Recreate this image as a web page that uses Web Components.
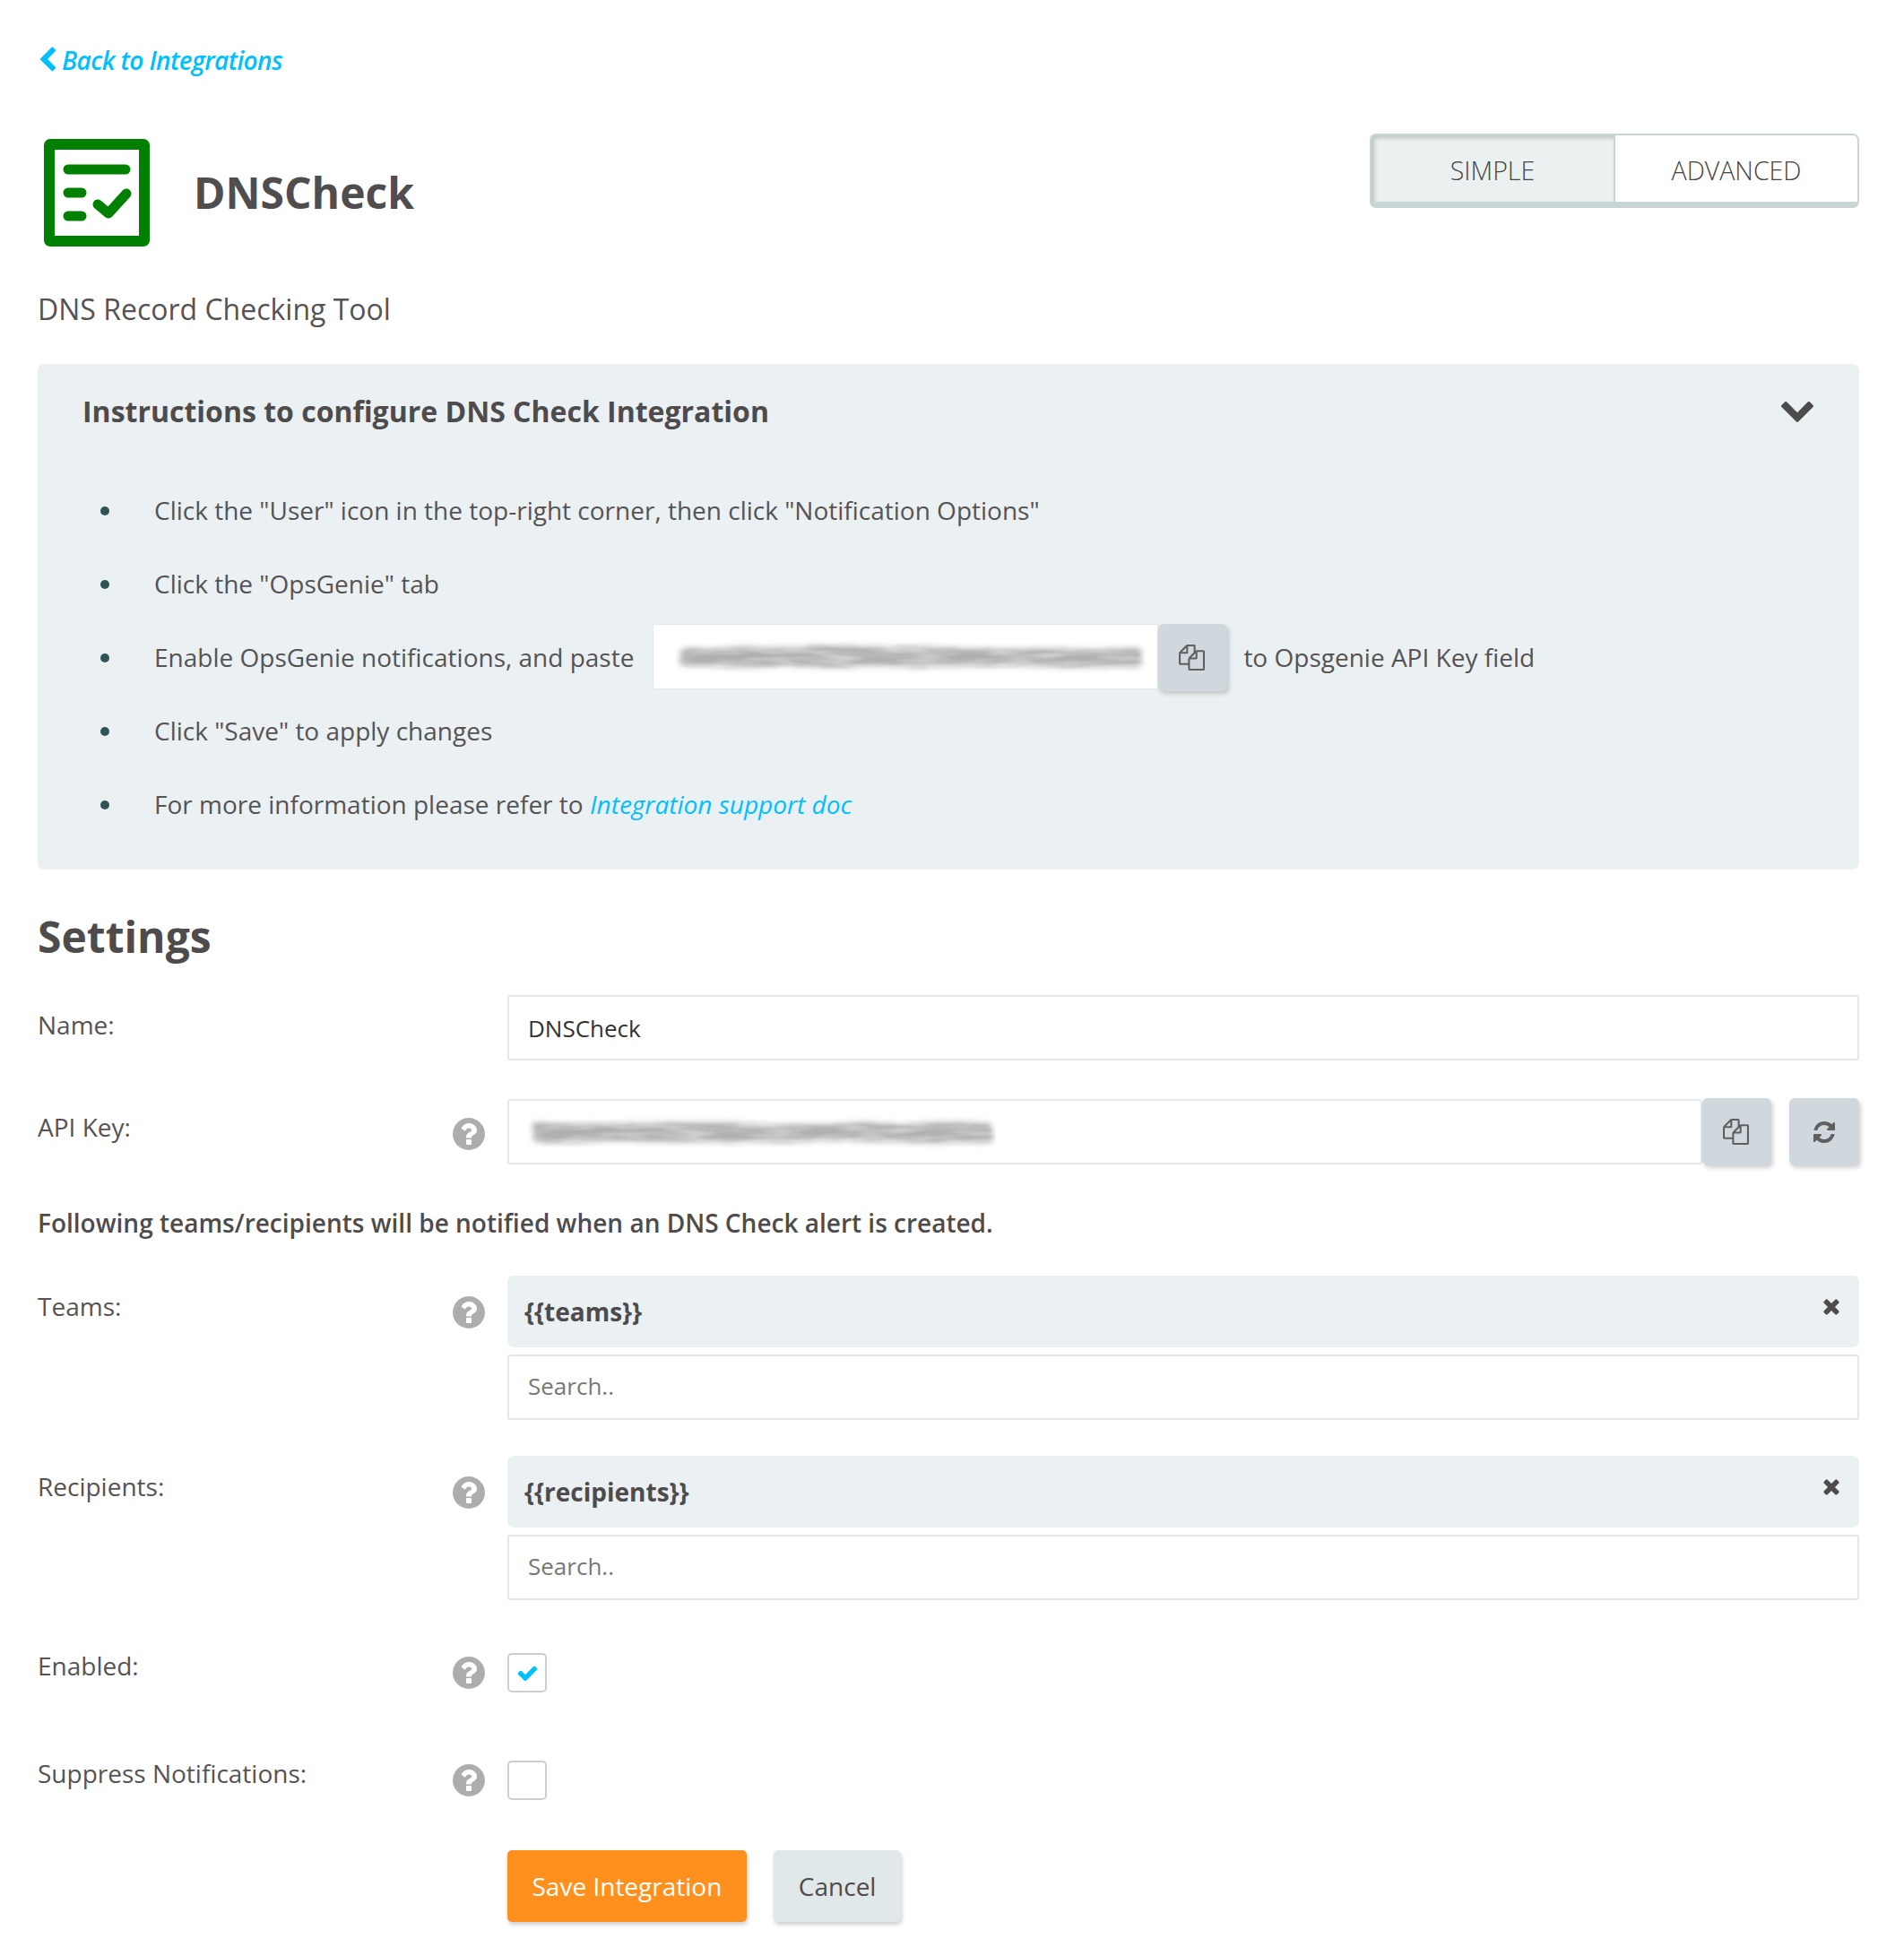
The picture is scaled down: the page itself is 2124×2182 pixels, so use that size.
<!DOCTYPE html>
<html lang="en"><head><meta charset="utf-8"><title>DNSCheck</title>
<style>
html,body{margin:0;background:#fff}
body{font-family:"Open Sans",sans-serif;color:#565354;font-size:28px}
</style></head><body>
<integration-page></integration-page>
<template id="t-page">
<style>
:host{display:block;padding:47px 50px 38px 42px;width:2032px}
.head{display:flex;align-items:flex-start;margin-top:64px;height:126px}
.logo{width:118px;height:120px;margin:4px 0 0 7px;flex:none}
h1{margin:0;font-size:48px;line-height:64px;font-weight:700;margin:32px 0 0 49px;flex:1;color:#504d4e}
.sub{margin:46px 0 0;font-size:32px;line-height:44px;font-weight:400}
h2{margin:43px 0 0;font-size:48px;line-height:64px;font-weight:700;color:#4e4b4c}
.note{margin:44px 0 0;font-size:28px;line-height:40px;font-weight:600;color:#4e4b4c}
.acts{display:flex;gap:30px;margin-left:524px;margin-top:56px}
.stack{display:flex;flex-direction:column;gap:8px}
.api{display:flex;gap:20px;align-items:flex-start}
.apif{flex:1;display:flex;align-items:flex-start;min-width:0}
form-row{margin-top:var(--mt)}
</style>
<back-link>Back to Integrations</back-link>
<div class="head">
<svg class="logo" viewBox="0 0 118 120" aria-hidden="true"><path fill="#008000" fill-rule="evenodd" d="M7 0H111a7 7 0 0 1 7 7V113a7 7 0 0 1-7 7H7a7 7 0 0 1-7-7V7a7 7 0 0 1 7-7ZM12 12V108H106V12Z"/><g fill="none" stroke="#008000" stroke-width="11" stroke-linecap="round" stroke-linejoin="round"><path d="M27 34H91"/><path d="M27 60H42"/><path d="M27 86H42"/><path d="M60 73L72 83L92 61"/></g></svg>
<h1>DNSCheck</h1>
<mode-toggle></mode-toggle>
</div>
<p class="sub">DNS Record Checking Tool</p>
<instructions-panel title-text="Instructions to configure DNS Check Integration"></instructions-panel>
<h2>Settings</h2>
<form-row label="Name:" style="--mt:33px;--lt:14px"><text-box value="DNSCheck"></text-box></form-row>
<form-row label="API Key:" help style="--mt:43px;--lt:12px;--ht:17px"><div class="api"><div class="apif"><text-box blurred style="flex:1"></text-box><icon-button icon="copy" style="margin-top:-1px;width:77px"></icon-button></div><icon-button icon="refresh" style="margin-top:-1px"></icon-button></div></form-row>
<p class="note">Following teams/recipients will be notified when an DNS Check alert is created.</p>
<form-row label="Teams:" help style="--mt:39px;--lt:15px;--ht:19px"><div class="stack"><tag-chip>{{teams}}</tag-chip><text-box placeholder="Search.."></text-box></div></form-row>
<form-row label="Recipients:" help style="--mt:40px;--lt:15px;--ht:19px"><div class="stack"><tag-chip>{{recipients}}</tag-chip><text-box placeholder="Search.."></text-box></div></form-row>
<form-row label="Enabled:" help style="--mt:59px;--lt:-5px;--ht:0px"><check-box checked></check-box></form-row>
<form-row label="Suppress Notifications:" help style="--mt:76px;--lt:-5px;--ht:0px"><check-box></check-box></form-row>
<div class="acts"><action-button primary>Save Integration</action-button><action-button>Cancel</action-button></div>
</template>
<script>
const P={
left:'M1427 301l-531 531 531 531q19 19 19 45t-19 45l-166 166q-19 19-45 19t-45-19l-742-742q-19-19-19-45t19-45l742-742q19-19 45-19t45 19l166 166q19 19 19 45t-19 45z',
down:'M1683 808l-742 741q-19 19-45 19t-45-19l-742-741q-19-19-19-45.5t19-45.5l166-165q19-19 45-19t45 19l531 531 531-531q19-19 45-19t45 19l166 165q19 19 19 45.5t-19 45.5z',
times:'M1490 1322q0 40-28 68l-136 136q-28 28-68 28t-68-28l-294-294-294 294q-28 28-68 28t-68-28l-136-136q-28-28-28-68t28-68l294-294-294-294q-28-28-28-68t28-68l136-136q28-28 68-28t68 28l294 294 294-294q28-28 68-28t68 28l136 136q28 28 28 68t-28 68l-294 294 294 294q28 28 28 68z',
refresh:'M1639 1056q0 5-1 7-64 268-268 434.5t-478 166.5q-146 0-282.5-55t-243.5-157l-129 129q-19 19-45 19t-45-19-19-45v-448q0-26 19-45t45-19h448q26 0 45 19t19 45-19 45l-137 137q71 66 161 102t187 36q134 0 250-65t186-179q11-17 53-117 8-23 30-23h192q13 0 22.5 9.5t9.5 22.5zm25-800v448q0 26-19 45t-45 19h-448q-26 0-45-19t-19-45 19-45l138-138q-148-137-349-137-134 0-250 65t-186 179q-11 17-53 117-8 23-30 23h-199q-13 0-22.5-9.5t-9.5-22.5v-7q65-268 270-434.5t480-166.5q146 0 284 55.5t245 156.5l130-129q19-19 45-19t45 19 19 45z',
help:'M1024 1376v-192q0-14-9-23t-23-9h-192q-14 0-23 9t-9 23v192q0 14 9 23t23 9h192q14 0 23-9t9-23q0-19 21.5-49.5t54.5-49.5q32-18 49-28.5t46-35 44.5-48 28-60.5 12.5-81zm384 192q0 209-103 385.5t-279.5 279.5-385.5 103-385.5-103-279.5-279.5-103-385.5 103-385.5 279.5-279.5 385.5-103 385.5 103 279.5 279.5 103 385.5z',
check:'M1671 566q0 40-28 68l-724 724-136 136q-28 28-68 28t-68-28l-136-136-362-362q-28-28-28-68t28-68l136-136q28-28 68-28t68 28l294 295 656-657q28-28 68-28t68 28l136 136q28 28 28 68z',
copy:'M1696 384q40 0 68 28t28 68v1216q0 40-28 68t-68 28h-960q-40 0-68-28t-28-68v-288h-544q-40 0-68-28t-28-68v-672q0-40 20-88t48-76l408-408q28-28 76-48t88-20h416q40 0 68 28t28 68v328q68-40 128-40h416zm-544 213l-299 299h299v-299zm-640-384l-299 299h299v-299zm196 647l316-316v-416h-384v416q0 40-28 68t-68 28h-416v640h512v-256q0-40 20-88t48-76zm956 804v-1152h-384v416q0 40-28 68t-68 28h-416v640h896z'};
P.help='M1024 1376v-192q0-14-9-23t-23-9h-192q-14 0-23 9t-9 23v192q0 14 9 23t23 9h192q14 0 23-9t9-23zm256-672q0-88-55.5-163t-138.5-116-170-41q-243 0-371 213-15 24 8 42l132 100q7 6 19 6 16 0 25-12 53-68 86-92 34-24 86-24 48 0 85.5 26t37.5 59q0 38-20 61t-68 45q-63 28-115.5 86.5t-52.5 125.5v36q0 14 9 23t23 9h192q14 0 23-9t9-23q0-19 21.5-49.5t54.5-49.5q32-18 49-28.5t46-35 44.5-48 28-60.5 12.5-81zm384 192q0 209-103 385.5t-279.5 279.5-385.5 103-385.5-103-279.5-279.5-103-385.5 103-385.5 279.5-279.5 385.5-103 385.5 103 279.5 279.5 103 385.5z';
const ic=(n,s,c,x='')=>`<svg width="${s}" height="${s}" viewBox="0 0 1792 1792" style="display:block;flex:none;${x}" aria-hidden="true"><path fill="${c}" d="${P[n]}"/></svg>`;
function el(name,render){customElements.define(name,class extends HTMLElement{constructor(){super();this.attachShadow({mode:'open'})}connectedCallback(){if(!this.shadowRoot.firstChild)this.shadowRoot.innerHTML=render(this)}})}
const smear=(w,seed)=>`<svg width="${w}" height="40" viewBox="0 0 ${w} 40" style="display:block" aria-hidden="true"><defs><filter id="s" x="-5%" y="-80%" width="110%" height="260%"><feTurbulence type="fractalNoise" baseFrequency="0.01 0.06" numOctaves="2" seed="${seed}" result="n"/><feDisplacementMap in="SourceGraphic" in2="n" scale="10" result="d"/><feGaussianBlur in="d" stdDeviation="3.2" result="b"/><feTurbulence type="fractalNoise" baseFrequency="0.02 0.12" numOctaves="2" seed="3" result="m"/><feColorMatrix in="m" type="matrix" values="0 0 0 0 0 0 0 0 0 0 0 0 0 0 0 0 0 0 .9 .42" result="a"/><feComposite in="b" in2="a" operator="in"/></filter></defs><rect x="5" y="9" width="${w-10}" height="22" rx="6" fill="#b0b0b0" filter="url(#s)"/></svg>`;

el('back-link',()=>`<style>:host{display:flex;align-items:center;height:40px;color:#00bfff;font-size:28px;font-style:italic;font-weight:600;letter-spacing:-.6px}span{margin-left:1px}</style>${ic('left',30,'#00bfff','margin-left:-4px')}<span><slot></slot></span>`);
el('mode-toggle',()=>`<style>:host{display:flex;width:546px;height:83px;box-sizing:border-box;border:2px solid #c9d6d6;border-bottom-width:7px;border-radius:7px;margin-top:-2px;font-size:28.5px;font-weight:300;color:#444;overflow:hidden}div{flex:1;display:flex;align-items:center;justify-content:center;padding-top:3px}.a{background:#ebf0f0;box-shadow:inset 3px 3px 5px rgba(0,0,0,.2);border-right:2px solid #c9d6d6}</style><div class="a">SIMPLE</div><div>ADVANCED</div>`);
el('instructions-panel',h=>`<style>:host{display:block;background:#ebf0f3;border-radius:7px;margin-top:39px;height:564px;padding:0 50px;box-sizing:border-box;font-size:28px}
.t{display:flex;align-items:center;justify-content:space-between;height:104px;font-size:32px;font-weight:700;color:#4e4b4c}
ul{list-style:none;margin:18px 0 0;padding:0}
li{display:flex;align-items:center;height:82px;position:relative;padding-left:80px;white-space:pre}
li::before{content:"";position:absolute;left:20px;top:37px;width:10px;height:10px;border-radius:50%;background:#2d5555}
a{color:#00bfff;font-style:italic;text-decoration:none}
copy-field{margin:0 18px 0 21px}
</style><div class="t"><span>${h.getAttribute('title-text')}</span>${ic('down',40,'#4e4b4c','margin:-4px -1px 0 0')}</div>
<ul><li>Click the "User" icon in the top-right corner, then click "Notification Options"</li><li>Click the "OpsGenie" tab</li><li>Enable OpsGenie notifications, and paste<copy-field></copy-field>to Opsgenie API Key field</li><li>Click "Save" to apply changes</li><li>For more information please refer to <a href="#">Integration support doc</a></li></ul>`);
el('copy-field',()=>`<style>:host{display:flex;width:641px;height:74px;align-items:flex-start}.f{flex:1;height:73px;background:#fff;border:1px solid #e3e8ec;border-radius:3px 0 0 3px;box-sizing:border-box;display:flex;align-items:center;padding-left:25px}</style><div class="f">${smear(525,7)}</div><icon-button icon="copy" style="width:77px"></icon-button>`);
el('icon-button',h=>`<style>:host{display:flex;width:78px;height:75px;flex:none;align-items:center;justify-content:center;background:#d0d8de;border-radius:6px;box-shadow:2px 3px 5px rgba(0,0,0,.18)}</style>${h.getAttribute('icon')=='copy'?ic('copy',29,'#5f5f5f','margin-left:-3px'):ic('refresh',28,'#5f5f5f')}`);
el('form-row',h=>`<style>:host{display:grid;grid-template-columns:462px 62px 1fr;font-size:28px}.l{padding-top:var(--lt,0)}.l span{display:block;line-height:38px}.h{padding-top:var(--ht,0)}.c{min-width:0}</style><div class="l" style="${parseInt(h.style.getPropertyValue('--lt'))<0?'margin-top:var(--lt);padding-top:0':''}"><span>${h.getAttribute('label')}</span></div><div class="h">${h.hasAttribute('help')?ic('help',42,'#adadad','margin:1px 0 0 -2px'):''}</div><div class="c"><slot></slot></div>`);
el('text-box',h=>{const v=h.getAttribute('value'),p=h.getAttribute('placeholder');return `<style>:host{display:flex;align-items:center;height:73px;box-sizing:border-box;border:2px solid #e3e8ec;border-radius:3px;background:#fff;font-size:26px;color:${v?'#333':'#777'};min-width:0;padding-left:21px;padding-bottom:${p?'3px':'0'}}</style>${h.hasAttribute('blurred')?smear(522,12):(v||p)}`});
el('tag-chip',()=>`<style>:host{display:flex;justify-content:space-between;height:80px;background:#ebf0f3;border-radius:7px;padding:0 18px 0 19px;font-weight:700;font-size:28px;color:#4e4b4c}span{padding-top:20px;line-height:40px}i{padding-top:21px}</style><span><slot></slot></span><i>${ic('times',26,'#4e4b4c')}</i>`);
el('check-box',h=>`<style>:host{display:flex;align-items:center;justify-content:center;width:44px;height:44px;box-sizing:border-box;border:2px solid #c9cfd2;border-radius:5px;background:#fff}</style>${h.hasAttribute('checked')?ic('check',25,'#00bfff'):''}`);
el('action-button',h=>{const p=h.hasAttribute('primary');return `<style>:host{display:flex;align-items:center;justify-content:center;height:80px;padding:0 ${p?'27.5px':'28px'};border-radius:5px;background:${p?'#ff901e':'#e1e8ea'};color:${p?'#fff':'#4e4b4c'};font-size:28px;box-shadow:1px 3px 5px rgba(0,0,0,.2)}</style><slot></slot>`});
el('integration-page',()=>document.getElementById('t-page').innerHTML);
</script>
</body></html>
